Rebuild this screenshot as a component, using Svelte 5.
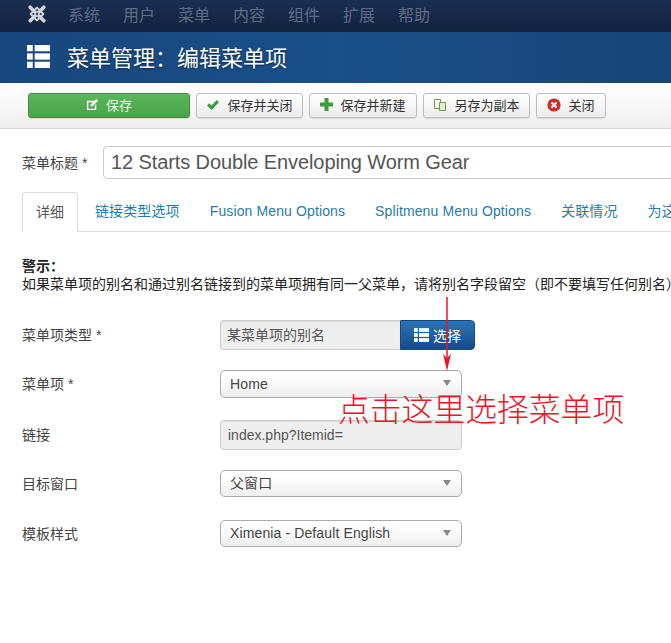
<script>
  const nav = ['系统', '用户', '菜单', '内容', '组件', '扩展', '帮助'];
  const tabs = ['链接类型选项', 'Fusion Menu Options', 'Splitmenu Menu Options', '关联情况', '为这个'];
</script>

<div class="page">
  <header class="nav">
    <svg class="logo" viewBox="0 0 22 22" width="20" height="20" aria-hidden="true">
      <g fill="none" stroke="#d2d5da" stroke-linecap="round" stroke-linejoin="round">
        <path d="M3.5 3.5 L18.5 18.5 M18.5 3.5 L3.5 18.5" stroke-width="4"/>
        <path d="M11 4 L18 11 L11 18 L4 11z" stroke-width="2.2"/>
      </g>
      <path d="M11 9.4 L12.6 11 L11 12.6 L9.4 11z" fill="#24375a"/>
    </svg>
    <nav class="menu">
      {#each nav as n}<span>{n}</span>{/each}
    </nav>
  </header>

  <div class="title">
    <svg class="list" viewBox="0 0 24 22" width="23" height="23" preserveAspectRatio="none" aria-hidden="true">
      <g fill="#fff">
        <rect x="0" y="0" width="6" height="6"/><rect x="8" y="0" width="16" height="6"/>
        <rect x="0" y="8" width="6" height="6"/><rect x="8" y="8" width="16" height="6"/>
        <rect x="0" y="16" width="6" height="6"/><rect x="8" y="16" width="16" height="6"/>
      </g>
    </svg>
    <h1>菜单管理：编辑菜单项</h1>
  </div>

  <div class="toolbar">
    <button class="btn save">
      <svg viewBox="0 0 14 14" width="13" height="13" aria-hidden="true">
        <path d="M1 3h8L7.5 4.5H2.5v7h7V8L11 6.5V13H1z" fill="#fff"/>
        <path d="M5 7 L11 1 L13 3 L7 9 L5 9z" fill="#fff"/>
      </svg>
      保存
    </button>
    <button class="btn w1">
      <svg viewBox="0 0 14 12" width="14" height="12" aria-hidden="true"><path d="M1 6.5 L3.2 4.2 L5.5 6.5 L10.8 1 L13 3.2 L5.5 11z" fill="#3f9b3f"/></svg>
      保存并关闭
    </button>
    <button class="btn w2">
      <svg viewBox="0 0 13 13" width="13" height="13" aria-hidden="true"><path d="M4.5 0h4v4.5H13v4H8.5V13h-4V8.5H0v-4h4.5z" fill="#3f9b3f"/></svg>
      保存并新建
    </button>
    <button class="btn w3">
      <svg viewBox="0 0 14 14" width="14" height="14" aria-hidden="true">
        <path d="M1.5 1.5h6v9h-6z" fill="#f4f8ee" stroke="#6f9a4e"/>
        <path d="M6.5 4.5h6v8h-6z" fill="#e3efd4" stroke="#6f9a4e"/>
      </svg>
      另存为副本
    </button>
    <button class="btn w4">
      <svg viewBox="0 0 14 14" width="14" height="14" aria-hidden="true">
        <circle cx="7" cy="7" r="6.6" fill="#c9302c"/>
        <path d="M4.5 4.5 L9.5 9.5 M9.5 4.5 L4.5 9.5" stroke="#fff" stroke-width="2"/>
      </svg>
      关闭
    </button>
  </div>

  <main class="content">
    <div class="title-row">
      <span class="title-label">菜单标题 *</span>
      <div class="title-input">12 Starts Double Enveloping Worm Gear</div>
    </div>

    <div class="tabs">
      <span class="tab active">详细</span>
      {#each tabs as t}<span class="tab">{t}</span>{/each}
    </div>

    <div class="warn">
      <strong>警示：</strong>
      <p>如果菜单项的别名和通过别名链接到的菜单项拥有同一父菜单，请将别名字段留空（即不要填写任何别名）。</p>
    </div>

    <div class="form">
      <div class="row">
        <span class="lbl">菜单项类型 *</span>
        <div class="append">
          <div class="ro joined">某菜单项的别名</div>
          <button class="pick">
            <svg viewBox="0 0 24 22" width="15" height="14" aria-hidden="true">
              <g fill="#fff">
                <rect x="0" y="0" width="6" height="6"/><rect x="8" y="0" width="16" height="6"/>
                <rect x="0" y="8" width="6" height="6"/><rect x="8" y="8" width="16" height="6"/>
                <rect x="0" y="16" width="6" height="6"/><rect x="8" y="16" width="16" height="6"/>
              </g>
            </svg>
            选择
          </button>
        </div>
      </div>
      <div class="row">
        <span class="lbl short">菜单项 *</span>
        <div class="select tall"><span>Home</span><i></i></div>
      </div>
      <div class="row">
        <span class="lbl">链接</span>
        <div class="ro wide">index.php?Itemid=</div>
      </div>
      <div class="row">
        <span class="lbl short">目标窗口</span>
        <div class="select"><span>父窗口</span><i></i></div>
      </div>
      <div class="row">
        <span class="lbl short">模板样式</span>
        <div class="select"><span>Ximenia - Default English</span><i></i></div>
      </div>
    </div>
  </main>

  <svg class="arrow" viewBox="0 0 12 74" width="12" height="74" aria-hidden="true">
    <path d="M6 0 V62" stroke="#ec1427" stroke-width="1.5" fill="none"/>
    <path d="M6 74 L2 57 L6 61 L10 57z" fill="#ec1427"/>
  </svg>
  <span class="note-text">点击这里选择菜单项</span>
</div>

<style>
  :global(body) {
    margin: 0;
    background: #fff;
  }
  .page {
    position: relative;
    width: 671px;
    height: 643px;
    overflow: hidden;
    font-family: "Liberation Sans", "Noto Sans CJK SC", sans-serif;
    font-size: 14px;
    color: #444;
  }
  .nav {
    display: flex;
    align-items: center;
    height: 32px;
    padding: 0 0 5px 27px;
    box-sizing: border-box;
    background: linear-gradient(#1b2f52, #12233f);
  }
  .logo { flex: none; }
  .menu {
    display: flex;
    gap: 23px;
    margin-left: 21px;
    font-size: 16px;
    color: #5f6d84;
  }
  .title {
    display: flex;
    align-items: center;
    height: 51px;
    padding: 0 0 3px 27px;
    box-sizing: border-box;
    background: linear-gradient(90deg, #17477c, #1a4f88 50%, #174678);
  }
  .list { flex: none; }
  h1 {
    margin: 0 0 0 17px;
    font-size: 22px;
    font-weight: 400;
    color: #fff;
    text-shadow: 0 1px 2px rgba(0, 0, 0, .5);
  }
  .toolbar {
    display: flex;
    gap: 6px;
    height: 46px;
    padding: 10px 0 0 28px;
    box-sizing: border-box;
    background: linear-gradient(#fff, #efefef);
    border-bottom: 1px solid #d6d6d6;
  }
  .btn {
    display: flex;
    align-items: center;
    justify-content: center;
    gap: 7px;
    height: 25px;
    padding: 0 0 2px;
    border: 1px solid #bdbdbd;
    border-radius: 3px;
    background: linear-gradient(#fff, #ececec);
    box-shadow: 0 1px 1px rgba(0, 0, 0, .1);
    font: inherit;
    font-size: 13px;
    color: #333;
  }
  .btn.save {
    width: 162px;
    border-color: #3f8d3f;
    background: linear-gradient(#5bb75b, #4aa34a);
    color: #e6f3e6;
  }
  .w1 { width: 107px; }
  .w2 { width: 108px; }
  .w3 { width: 107px; }
  .w4 { width: 70px; }
  .content { padding: 0 0 0 22px; }
  .title-row {
    display: flex;
    align-items: center;
    margin-top: 17px;
    white-space: nowrap;
  }
  .title-label { width: 81px; flex: none; padding-bottom: 2px; }
  .title-input {
    flex: none;
    width: 620px;
    height: 33px;
    box-sizing: border-box;
    padding-left: 7px;
    border: 1px solid #ccc;
    border-radius: 4px;
    font-size: 20px;
    line-height: 31px;
    color: #555;
    letter-spacing: -0.1px;
  }
  .tabs {
    display: flex;
    height: 40px;
    margin-top: 13px;
    border-bottom: 1px solid #ddd;
    white-space: nowrap;
    box-sizing: border-box;
    overflow: visible;
  }
  .tab {
    flex: none;
    padding: 0 15px;
    line-height: 38px;
    letter-spacing: .12px;
    color: #1f7cad;
  }
  .tab.active {
    flex: none;
    width: 56px;
    height: 40px;
    margin-right: 2px;
    padding: 0;
    box-sizing: border-box;
    text-align: center;
    border: 1px solid #ddd;
    border-bottom: 0;
    border-radius: 4px 4px 0 0;
    background: #fff;
    color: #555;
  }
  .warn {
    margin-top: 25px;
    white-space: nowrap;
    line-height: 18px;
  }
  .warn strong { display: block; color: #222; }
  .warn p { margin: 0; color: #222; }
  .form {
    display: flex;
    flex-direction: column;
    margin-top: 27px;
    gap: 20px;
  }
  .row {
    display: flex;
    align-items: flex-start;
    height: 30px;
  }
  .lbl { width: 198px; flex: none; line-height: 30px; }
  .lbl.short { line-height: 28px; }
  .append { display: flex; }
  .ro {
    height: 30px;
    box-sizing: border-box;
    padding-left: 7px;
    border: 1px solid #ccc;
    border-radius: 4px;
    background: #eee;
    box-shadow: inset 0 1px 1px rgba(0, 0, 0, .08);
    line-height: 28px;
    color: #555;
  }
  .ro.wide { width: 242px; }
  .ro.joined {
    width: 180px;
    padding-left: 6px;
    border-right: 0;
    border-radius: 4px 0 0 4px;
  }
  .pick {
    display: flex;
    align-items: center;
    justify-content: center;
    gap: 4px;
    width: 75px;
    height: 30px;
    padding: 0;
    border: 1px solid #174a80;
    border-radius: 0 4px 4px 0;
    background: linear-gradient(#2a74b8, #154b85);
    font: inherit;
    color: #fff;
  }
  .select {
    position: relative;
    width: 242px;
    height: 27px;
    box-sizing: border-box;
    padding-left: 9px;
    border: 1px solid #aaa;
    border-radius: 5px;
    background: linear-gradient(#fff 20%, #eee);
    line-height: 25px;
    letter-spacing: .12px;
    color: #444;
  }
  .select.tall { height: 28px; line-height: 26px; }
  .select i {
    position: absolute;
    right: 10px;
    top: 9px;
    border-left: 4px solid transparent;
    border-right: 4px solid transparent;
    border-top: 6px solid #888;
  }
  .arrow {
    position: absolute;
    left: 441px;
    top: 297px;
  }
  .note-text {
    position: absolute;
    left: 338px;
    top: 387px;
    font-size: 31.8px;
    line-height: 40px;
    font-family: "Noto Sans CJK SC", sans-serif;
    font-weight: 300;
    color: #ec1427;
    white-space: nowrap;
  }
</style>
